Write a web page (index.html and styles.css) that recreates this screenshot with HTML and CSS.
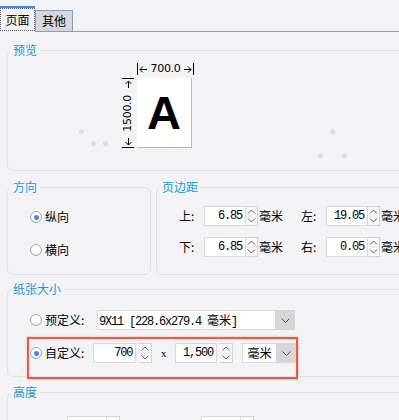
FILE: index.html
```html
<!DOCTYPE html>
<html lang="zh-CN">
<head>
<meta charset="utf-8">
<title>页面设置</title>
<link rel="stylesheet" href="styles.css">
</head>
<body>
<div class="tabs">
   <div class="tab-on"><span class="tab-focus">页面</span></div>
   <div class="tab-off">其他</div>
   <div class="tab-rest"></div>
</div>

<div class="page">
   <fieldset class="group">
      <legend>预览</legend>
      <div class="preview">
         <span class="dot d1"></span><span class="dot d2"></span><span class="dot d3"></span>
         <span class="dot d4"></span><span class="dot d5"></span><span class="dot d6"></span>
         <div class="sheet">
            <div class="ruler-top">
               <svg class="arrow" width="8" height="7" viewBox="0 0 8 7"><path d="M1 3.5h7M4 .5l-3 3 3 3" fill="none" stroke="#000"/></svg>
               <span>700.0</span>
               <svg class="arrow" width="8" height="7" viewBox="0 0 8 7"><path d="M0 3.5h7M4 .5l3 3-3 3" fill="none" stroke="#000"/></svg>
            </div>
            <div class="ruler-left">
               <svg class="arrow" width="7" height="8" viewBox="0 0 7 8"><path d="M3.5 1v7M.5 4l3-3 3 3" fill="none" stroke="#000"/></svg>
               <span class="vtext">1500.0</span>
               <svg class="arrow" width="7" height="8" viewBox="0 0 7 8"><path d="M3.5 0v7M.5 4l3 3 3-3" fill="none" stroke="#000"/></svg>
            </div>
            <div class="paper">A</div>
         </div>
      </div>
   </fieldset>

   <div class="split">
      <fieldset class="group dir">
         <legend>方向</legend>
         <div class="dir-body">
            <div class="radio-row"><span class="radio on"></span>纵向</div>
            <div class="radio-row"><span class="radio"></span>横向</div>
         </div>
      </fieldset>
      <fieldset class="group margins">
         <legend>页边距</legend>
         <div class="margins-body">
            <div class="mrow">
               <span class="mlabel">上:</span>
               <span class="num">6.85</span>
               <span class="spin"><svg width="11" height="18" viewBox="0 0 11 18"><path d="M0 9h11" stroke="#e4e4e4"/><path d="M2 6.5l3.5-3.5 3.5 3.5M2 11.5l3.5 3.5 3.5-3.5" fill="none" stroke="#5c5c5c"/></svg></span>
               <span class="unit">毫米</span>
               <span class="mlabel gap">左:</span>
               <span class="num">19.05</span>
               <span class="spin"><svg width="11" height="18" viewBox="0 0 11 18"><path d="M0 9h11" stroke="#e4e4e4"/><path d="M2 6.5l3.5-3.5 3.5 3.5M2 11.5l3.5 3.5 3.5-3.5" fill="none" stroke="#5c5c5c"/></svg></span>
               <span class="unit">毫米</span>
            </div>
            <div class="mrow">
               <span class="mlabel">下:</span>
               <span class="num">6.85</span>
               <span class="spin"><svg width="11" height="18" viewBox="0 0 11 18"><path d="M0 9h11" stroke="#e4e4e4"/><path d="M2 6.5l3.5-3.5 3.5 3.5M2 11.5l3.5 3.5 3.5-3.5" fill="none" stroke="#5c5c5c"/></svg></span>
               <span class="unit">毫米</span>
               <span class="mlabel gap">右:</span>
               <span class="num">0.05</span>
               <span class="spin"><svg width="11" height="18" viewBox="0 0 11 18"><path d="M0 9h11" stroke="#e4e4e4"/><path d="M2 6.5l3.5-3.5 3.5 3.5M2 11.5l3.5 3.5 3.5-3.5" fill="none" stroke="#5c5c5c"/></svg></span>
               <span class="unit">毫米</span>
            </div>
         </div>
      </fieldset>
   </div>

   <fieldset class="group paper-size">
      <legend>纸张大小</legend>
      <div class="paper-body">
         <div class="radio-row preset">
            <span class="radio"></span>
            <span class="plabel">预定义:</span>
            <span class="combo wide"><span class="combo-text">9X11 [228.6x279.4 <span class="cjk">毫米</span>]</span><span class="combo-btn"><svg width="9" height="5" viewBox="0 0 9 5"><path d="M.5.5l4 4 4-4" fill="none" stroke="#555"/></svg></span></span>
         </div>
         <div class="radio-row custom">
            <span class="radio on"></span>
            <span class="plabel">自定义:</span>
            <span class="num w1">700</span>
            <span class="spin sp13"><svg width="12" height="18" viewBox="0 0 12 18"><path d="M0 9h12" stroke="#e4e4e4"/><path d="M2.5 6.5l3.5-3.5 3.5 3.5M2.5 11.5l3.5 3.5 3.5-3.5" fill="none" stroke="#5c5c5c"/></svg></span>
            <span class="times">x</span>
            <span class="num w2">1,500</span>
            <span class="spin sp13"><svg width="12" height="18" viewBox="0 0 12 18"><path d="M0 9h12" stroke="#e4e4e4"/><path d="M2.5 6.5l3.5-3.5 3.5 3.5M2.5 11.5l3.5 3.5 3.5-3.5" fill="none" stroke="#5c5c5c"/></svg></span>
            <span class="combo unitbox"><span class="combo-text cjk">毫米</span><span class="combo-btn"><svg width="9" height="5" viewBox="0 0 9 5"><path d="M.5.5l4 4 4-4" fill="none" stroke="#555"/></svg></span></span>
         </div>
      </div>
   </fieldset>

   <fieldset class="group height">
      <legend>高度</legend>
      <div class="hrow">
         <span class="num w3"></span>
         <span class="spin sp13"><svg width="12" height="18" viewBox="0 0 12 18"><path d="M0 9h12" stroke="#e4e4e4"/><path d="M2.5 6.5l3.5-3.5 3.5 3.5M2.5 11.5l3.5 3.5 3.5-3.5" fill="none" stroke="#5c5c5c"/></svg></span>
         <span class="num w3 far"></span>
         <span class="spin sp13"><svg width="12" height="18" viewBox="0 0 12 18"><path d="M0 9h12" stroke="#e4e4e4"/><path d="M2.5 6.5l3.5-3.5 3.5 3.5M2.5 11.5l3.5 3.5 3.5-3.5" fill="none" stroke="#5c5c5c"/></svg></span>
      </div>
   </fieldset>
</div>
</body>
</html>
```

FILE: styles.css
```css
body {
   margin:0;
   width:440px;
   height:420px;
   overflow:hidden;
   background:#f3f3f5;
   color:#000;
   font-family:"Noto Sans CJK SC", sans-serif;
   font-size:12px;
   line-height:16px;
}

/* tab strip */
.tabs {
   display:flex;
   align-items:flex-end;
   height:32px;
}
.tab-on {
   width:35px;
   height:26px;
   box-sizing:border-box;
   border-top:2px solid #3a8ee8;
   padding-bottom:1px;
}
.tab-focus {
   display:block;
   height:23px;
   box-sizing:border-box;
   border:1px dotted #5b5b78;
   text-align:center;
   line-height:21px;
}
.tab-off {
   width:38px;
   height:22px;
   box-sizing:border-box;
   border:1px solid #8e9cb5;
   background:#d6d7dc;
   text-align:center;
   line-height:20px;
}
.tab-rest {
   flex:1;
   height:1px;
   background:#8e9cb5;
}

.page {
   padding:10px 0 0 7px;
}

/* group boxes */
.group {
   margin:0;
   padding:0;
   min-width:0;
   border:1px solid #e1e1e5;
   border-radius:6px;
}
.group legend {
   margin-left:2px;
   padding:0 3px;
   color:#1b9ad8;
   line-height:16px;
}

/* preview */
.preview {
   position:relative;
   height:112px;
}
.dot {
   position:absolute;
   width:5px;
   height:5px;
   border-radius:50%;
   background:#dcdcdf;
}
.d1 { left:71px; top:71px; }
.d2 { left:83px; top:83px; }
.d3 { left:95px; top:83px; }
.d4 { left:322px; top:71px; }
.d5 { left:310px; top:95px; }
.d6 { left:334px; top:95px; }

.sheet {
   display:grid;
   grid-template-columns:12px 57px;
   grid-template-rows:13px 70px;
   gap:3px;
   margin-left:114px;
   padding-top:4px;
}
.ruler-top, .ruler-left {
   display:flex;
   justify-content:space-between;
   align-items:center;
   font-family:"DejaVu Sans", sans-serif;
   font-size:11px;
   letter-spacing:-0.3px;
}
.ruler-top {
   grid-column:2;
   height:12px;
   margin-top:1px;
   padding:0 1px;
   border-left:1px solid #000;
   border-right:1px solid #000;
}
.ruler-left {
   grid-column:1;
   grid-row:2;
   flex-direction:column;
   border-top:1px solid #000;
   border-bottom:1px solid #000;
   padding:1px 0;
}
.vtext {
   writing-mode:vertical-rl;
   transform:rotate(180deg);
   line-height:12px;
}
.arrow {
   flex:none;
}
.paper {
   grid-column:2;
   grid-row:2;
   width:55px;
   box-sizing:border-box;
   background:#fff;
   border-right:1px solid #b5b5b5;
   border-bottom:1px solid #b5b5b5;
   display:flex;
   align-items:center;
   justify-content:center;
   font:bold 47px/1 "Liberation Sans", sans-serif;
}

/* direction + margins */
.split {
   display:flex;
   gap:5px;
   margin-top:8px;
}
.dir {
   width:144px;
   box-sizing:border-box;
}
.dir-body {
   padding:12px 0 14px 22px;
}
.margins {
   flex:1;
}
.margins-body {
   padding:11px 0 0 22px;
}
.radio-row {
   display:flex;
   align-items:center;
   gap:3px;
   height:20px;
}
.dir .radio-row + .radio-row {
   margin-top:13px;
}
.radio {
   flex:none;
   width:12px;
   height:12px;
   box-sizing:border-box;
   border:1px solid #a8a8a8;
   border-radius:50%;
   background:radial-gradient(circle at 50% 40%, #fff 45%, #e0e0e0);
   display:flex;
   align-items:center;
   justify-content:center;
}
.radio.on::after {
   content:"";
   width:5px;
   height:5px;
   border-radius:50%;
   background:#3b87ea;
}

.mrow {
   display:flex;
   align-items:center;
   height:20px;
}
.mrow + .mrow {
   margin-top:11px;
}
.mlabel {
   width:25px;
}
.mlabel.gap {
   margin-left:18px;
}
.unit {
   margin-left:1px;
   white-space:nowrap;
}

/* number boxes */
.num {
   width:42px;
   height:20px;
   box-sizing:border-box;
   border:1px solid #d9d9d9;
   background:#fff;
   padding-right:3px;
   text-align:right;
   font-family:"Liberation Mono", monospace;
   font-size:12px;
   letter-spacing:-1.2px;
   line-height:18px;
}
.spin {
   width:12px;
   height:20px;
   box-sizing:border-box;
   border:1px solid #d3d3d3;
   border-left:none;
   background:#f9f9f9;
   display:flex;
}
.sp13 {
   width:13px;
}

/* paper size */
.paper-size {
   margin-top:6px;
}
.paper-body {
   padding-top:13px;
}
.preset {
   padding-left:22px;
}
.plabel {
   width:49px;
}
.combo {
   display:flex;
   height:20px;
}
.combo-text {
   box-sizing:border-box;
   border:1px solid #dadada;
   border-right:none;
   background:#fff;
   padding-left:1px;
   font-family:"Liberation Mono", monospace;
   font-size:12px;
   letter-spacing:-1.2px;
   line-height:18px;
   white-space:nowrap;
}
.cjk {
   font-family:"Noto Sans CJK SC", sans-serif;
   font-size:12px;
   letter-spacing:0;
}
.combo-btn {
   width:20px;
   background:#d6d6da;
   display:flex;
   align-items:center;
   justify-content:center;
}
.wide .combo-text {
   width:178px;
}
.custom {
   width:271px;
   box-sizing:border-box;
   height:42px;
   margin:7px 0 -3px 19px;
   padding:4px 0 0 1px;
   border:2px solid #f4563e;
   box-shadow:0 0 2px rgba(244,86,62,.5);
   align-items:flex-start;
}
.custom .radio {
   margin-top:4px;
}
.custom .plabel {
   line-height:20px;
}
.num.w1 {
   width:46px;
}
.num.w2 {
   width:45px;
}
.times {
   width:18px;
   text-align:center;
   font-family:"Liberation Serif", serif;
   font-size:11px;
   line-height:20px;
}
.unitbox {
   margin-left:6px;
}
.unitbox .combo-text {
   width:34px;
   text-align:center;
   padding-left:0;
}

/* height */
.height {
   margin-top:7px;
}
.hrow {
   display:flex;
   padding:16px 0 0 59px;
}
.num.w3 {
   width:40px;
}
.num.far {
   margin-left:81px;
}
```
